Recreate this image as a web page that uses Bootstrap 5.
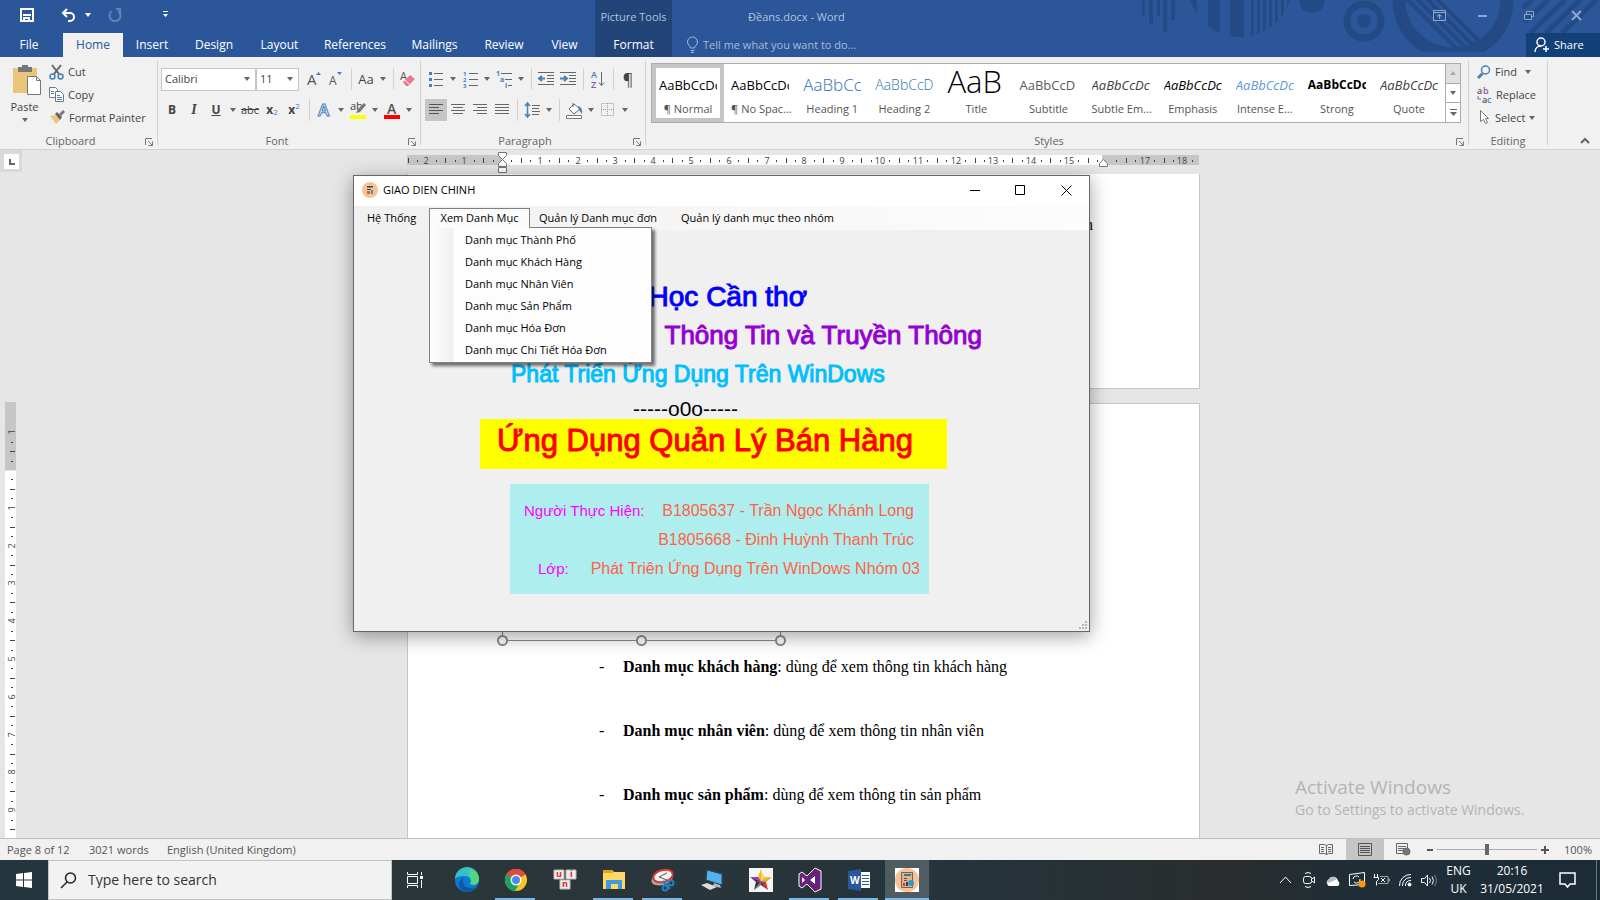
<!DOCTYPE html>
<html lang="en">
<head>
<meta charset="utf-8">
<meta name="viewport" content="width=device-width, initial-scale=1">
<title>Đềans.docx - Word</title>
<link href="https://cdn.jsdelivr.net/npm/bootstrap@5.3.0/dist/css/bootstrap.min.css" rel="stylesheet">
<style>
:root{--blue:#2b579a;--ink:#444;--line:#d2d2d2}
body{font:12px/16px "Open Sans","Noto Sans",sans-serif;color:var(--ink);background:#e6e6e6;overflow:hidden}
button{border:0;background:none;padding:0;color:inherit;font:inherit;white-space:nowrap}
svg{display:block;flex:none;overflow:visible}
/* header */
.appbar{background:var(--blue);color:#fff;position:relative}
.appbar .deco{position:absolute;top:0;right:0}
.qat{height:33px;padding:0 0 3px 19px}
.qat button{height:28px}
.tabs{display:grid;grid-template-columns:63px 60px 58px 66px 65px 86px 73px 66px 55px;height:24px}
.tabs button.on{background:#f1f1f1;color:var(--blue)}
.tabs button:first-child{padding-right:5px}
.pictools{width:77px;background:#224478;z-index:1}
.pictools div{height:33px;line-height:34px;color:#b3c3dc;font-size:11px}
.pictools button{height:24px}
.doc-title{color:#b3c3dc;padding-left:76px;line-height:34px;height:33px;font-size:11px}
.tell{color:#a9bbd7;padding-left:14px;font-size:11px}
.share{background:#124078;width:74px;height:24px}
.wctl{color:#8ea7cc;height:30px;padding-right:18px}
.sm11{font-size:11px}
/* ribbon */
.ribbon{background:#f1f1f1;border-bottom:1px solid var(--line);height:93px}
.grp{border-right:1px solid var(--line);margin:4px 0 4px;height:84px;position:relative;flex:none}
.grp.wide{flex:1 1 0;min-width:0}
.grp-name{height:18px;font-size:11px;line-height:18px;color:#666;text-align:center;position:relative}
.grp-name button{position:absolute;right:4px;top:6px}
.ctl{height:71px;overflow:hidden}
.strip{height:22px;display:flex;align-items:center}
.i22{width:22px;height:22px;display:flex;align-items:center;justify-content:center;flex:none}
.i12{width:12px;height:22px;display:flex;align-items:center;justify-content:center;flex:none}
.crt{display:block;border:3px solid transparent;border-top:4px solid #666;border-bottom:0}
.vs{width:8px;height:22px;display:flex;justify-content:center;flex:none}
.vs::after{content:"";width:1px;background:var(--line)}
.pressed{background:#c5c5c5}
.cmd{height:23px;display:flex;align-items:center;font-size:11px;gap:4px}
.pick{border:1px solid #c6c6c6;background:#fff url("data:image/svg+xml,%3Csvg xmlns='http://www.w3.org/2000/svg' width='6' height='4'%3E%3Cpath d='M0 0h6L3 4z' fill='%23666'/%3E%3C/svg%3E") no-repeat right 5px center;appearance:none;height:23px;font-size:11px;padding:0 3px;color:#444;border-radius:0}
.gallery{border:1px solid #ababab;background:#fff;height:60px;margin:2px 7px 0 5px}
.tile{flex:1 1 0;min-width:0;height:58px;padding:0 7px;overflow:hidden;display:flex;flex-direction:column}
.tile.on{outline:4px solid #c5c5c5;outline-offset:-4px}
.smp{height:32px;width:100%;overflow:hidden;margin-top:5px;font:13px/32px "Open Sans",sans-serif;text-align:left;color:#000;flex:none}
.tile .cap{font-size:11px;line-height:16px;text-align:center;width:100%;color:#555}
.spin{width:15px;border-left:1px solid #ababab}
.spin button{flex:1;display:flex;align-items:center;justify-content:center;width:100%}
.spin button+button{border-top:1px solid #ababab}
/* workspace */
.work{display:grid;grid-template-columns:22px 1fr 15px;flex:1;min-height:0;overflow:hidden;position:relative}
.corner{width:22px;height:22px;background:#d9d9d9;display:flex;align-items:center;justify-content:center}
.corner i{display:block;width:15px;height:15px;background:#fff;padding:5px}
.corner i::after{content:"";display:block;width:6px;height:6px;border:solid #666;border-width:0 0 2px 2px}
.sheet-col{width:793px;max-width:100%;margin:0 auto}
.sheet{background:#fff;border:1px solid #c6c6c6;font:16px/20px "Liberation Serif",serif;color:#000}
.sheet.first{height:215px;border-top:0;margin-bottom:14px;padding:41px 106px 0 0;text-align:right}
.sheet.second{height:900px;padding:10px 100px 0 94px}
.picsel{width:279px;height:227px;border:1px solid #8b8b8b;position:relative;margin-bottom:16px}
.picsel i{position:absolute;width:11px;height:11px;border:2px solid #8b8b8b;border-radius:50%;background:#fff;bottom:-6px}
.entry{padding-left:97px;margin-bottom:44px;display:flex;white-space:nowrap}
.entry span{width:24px}
.wmark{position:absolute;right:68px;bottom:17px;width:237px;color:#b4b4b4;font-size:14px;line-height:22px;white-space:nowrap}
.wmark div{font-size:19px;line-height:24px}
/* WinForms window */
.form-win{position:absolute;left:353px;top:175px;width:737px;height:457px;border:1px solid #666;background:#f0f0f0;box-shadow:0 4px 18px rgba(0,0,0,.38);color:#000;z-index:5}
.form-head{height:30px;background:#fff;padding:0 17px 2px 8px}
.form-menu{height:24px;background:linear-gradient(90deg,#f0f0f0,#fdfdfd);padding:2px 4px 0;font-size:11px}
.form-menu>div{position:relative}
.form-menu .top{height:20px;padding:0 9px 2px 8px;border:1px solid transparent;border-bottom:0}
.form-menu .open{background:#fbfbfb;border-color:#80807f;width:101px;padding:0 0 2px}
.drop{position:absolute;left:0;top:19px;width:223px;border:1px solid #808080;background:linear-gradient(90deg,#fdfdfd,#f0f0f0 23px,#fdfdfd 24px);padding:1px;box-shadow:3px 3px 3px rgba(0,0,0,.55);z-index:2}
.drop::before{content:"";position:absolute;left:0;top:-1px;width:99px;height:1px;background:#fbfbfb}
.drop button{display:block;height:22px;padding-left:34px;width:100%;text-align:left}
.form-body{padding-top:47px;font-family:"Liberation Sans",sans-serif;white-space:nowrap}
.ln{line-height:39px;margin:0;-webkit-text-stroke:1px currentColor}
.l1{font-size:28px;color:#00f;text-align:right;padding-right:282px}
.l2{font-size:26px;color:#9400d3;text-align:right;padding-right:107px}
.l3{font-size:23px;color:#00bfff;padding-left:157px}
.l4{font-size:21px;line-height:20px;padding:5px 0 0 279px}
.l5{font-size:31px;background:#ff0;color:red;-webkit-text-stroke:1px currentColor;width:467px;height:50px;line-height:44px;margin:0 0 15px 126px;padding-left:17px}
.who{background:#afeeee;width:419px;height:110px;margin-left:156px;padding:12px 15px 0 14px;font-size:16px;line-height:29px;color:#ff6347}
.who span{color:#f0f;font-size:15px}
/* status and task bars */
.status{height:22px;background:#f1f1f1;border-top:1px solid #c0c0c0;font-size:11px;color:#555}
.zoomer{appearance:none;width:100px;height:12px;background:linear-gradient(#aaa,#aaa) center/100% 1px no-repeat}
.zoomer::-webkit-slider-thumb{appearance:none;width:4px;height:11px;background:#666}
.task{height:40px;background:linear-gradient(90deg,#25353d,#2b363a 30%,#25343b 60%,#2a2d2d 77%,#1f2e37 85%,#1c2c36);color:#fff}
.find{width:344px;height:40px;background:#f2f2f2;border:1px solid #c2c2c2;padding-left:11px;gap:11px}
.find input{border:0;background:none;font-size:14px;color:#444;padding:0;width:270px;outline:0}
.find input::placeholder{color:#333;opacity:1}
.app{width:49px;height:40px;display:flex;align-items:center;justify-content:center;position:relative}
.run::after{content:"";position:absolute;left:4px;right:5px;bottom:0;height:2px;background:#76b9ed}
.act{background:#4f5c62;width:45px;margin-left:2px;border-right:1px solid #2b363a}.act::after{left:0;right:0}
.tray>button{width:24px;display:flex;justify-content:center}
.clock{font-size:12px;line-height:18px;text-align:center}
</style>
</head>
<body class="vh-100 d-flex flex-column">
<header class="appbar d-flex">
  <svg class="deco" width="460" height="57" viewBox="1140 0 460 57" fill="#234a85">
    <path d="M1142 0h3v16h-3zM1149 0h4v24h-4zM1157 0h3v16h-3zM1163 0h4v32h-4zM1171 0h4v20h-4z"/>
    <clipPath id="c1"><circle cx="1240" cy="-15" r="52"/></clipPath>
    <g clip-path="url(#c1)"><path d="M1188 0h9v30h-9zM1208 0h12v40h-12zM1230 0h14v40h-14zM1251 0h3v40h-3zM1257 0h3v40h-3zM1263 0h3v40h-3zM1269 0h3v40h-3zM1275 0h3v40h-3zM1281 0h3v40h-3zM1287 0h3v40h-3z"/></g>
    <circle cx="1312" cy="0" r="13"/>
    <circle cx="1364" cy="21" r="17" fill="none" stroke="#234a85" stroke-width="7"/><circle cx="1364" cy="21" r="7"/>
    <clipPath id="c2"><path d="M1390 0h130v52h-130z"/></clipPath>
    <g clip-path="url(#c2)"><circle cx="1453" cy="0" r="54" fill="none" stroke="#234a85" stroke-width="13"/>
    <path d="M1404-4l58 58M1414-4l58 58M1424-4l52 52M1434-4l48 48" stroke="#234a85" stroke-width="4"/></g>
    <clipPath id="c3"><path d="M1520 0h80v57h-80z"/></clipPath>
    <path clip-path="url(#c3)" d="M1523 8l9-8M1524 22l24-22M1530 33l35-33M1546 33l34-33M1562 33l34-33" stroke="#234a85" stroke-width="5"/>
  </svg>
  <div>
    <div class="qat d-flex align-items-center">
      <button aria-label="Save" style="width:42px"><svg width="16" height="16" fill="none" stroke="#fff" stroke-width="2"><path d="M2 2h12v12H2zM4 8h8M5 14v-3h5v3"/></svg></button>
      <div class="d-flex align-items-center" style="width:534px">
      <button aria-label="Undo"><svg width="16" height="16" fill="none" stroke="#fff" stroke-width="2"><path d="M6 2L2 6l4 4M2 6h7a4 4 0 0 1 0 8H7"/></svg></button>
      <button aria-label="Undo list" class="px-2"><span class="crt" style="border-top-color:#fff"></span></button>
      <button aria-label="Redo" class="ms-1 ps-1"><svg width="16" height="16" fill="none" stroke="#6382b5" stroke-width="2"><path d="M5 4a5.500 5.500 0 1 0 6 0M9 2h4v4"/></svg></button>
      <button aria-label="Customize toolbar" class="ms-4 ps-3"><svg width="6" height="8" fill="#fff"><path d="M0 0h5v1H0zM0 3h5L2.500 6z"/></svg></button>
      </div>
    </div>
    <nav class="tabs"><button>File</button><button class="on">Home</button><button>Insert</button><button>Design</button><button>Layout</button><button>References</button><button>Mailings</button><button>Review</button><button>View</button></nav>
  </div>
  <div class="pictools text-center"><div>Picture Tools</div><button>Format</button></div>
  <div class="flex-fill position-relative">
    <div class="d-flex justify-content-between"><div class="doc-title">Đềans.docx - Word</div>
      <div class="wctl d-flex align-items-center gap-4">
        <button aria-label="Ribbon display" class="me-1"><svg width="13" height="11" fill="none" stroke="currentColor"><path d="M.5.500h12v10H.5zM.5 2.500h12M6.500 9V4.500M4 6.500l2.500-2 2.500 2"/></svg></button>
        <button aria-label="Minimize" class="ms-1 me-2"><svg width="10" height="10"><path d="M0 5h9v2H0z" fill="currentColor"/></svg></button>
        <button aria-label="Restore" class="ms-1 me-2"><svg width="11" height="11" fill="none" stroke="currentColor"><path d="M.5 4.500h7v5h-7zM2.500 4V1.500h7v5H8"/></svg></button>
        <button aria-label="Close" class="ms-1"><svg width="11" height="11" fill="none" stroke="currentColor" stroke-width="2"><path d="M1 1l9 9M10 1l-9 9"/></svg></button>
      </div></div>
    <div class="d-flex justify-content-between align-items-center">
      <button class="tell d-flex gap-1 align-items-center"><svg width="13" height="16" fill="none" stroke="currentColor"><path d="M4.500 11c0-2-3-3-3-6a5 5 0 0 1 10 0c0 3-3 4-3 6zM4.500 13.500h4M5 15.500h3"/></svg>Tell me what you want to do...</button>
      <button class="share d-flex align-items-center ps-2 gap-1 sm11"><svg width="16" height="16" fill="none" stroke="#fff" stroke-width="1.500"><circle cx="7" cy="5" r="4"/><path d="M1 15c0-4 3-6 6-6M12 9v6M9 12h6"/></svg>Share</button>
    </div>
  </div>
</header>

<section class="ribbon d-flex">
  <div class="grp" style="width:158px"><div class="ctl d-flex">
    <button style="width:49px" class="d-flex flex-column align-items-center sm11"><svg class="mt-1 ms-1" width="29" height="31"><path d="M1 3h24v25H1z" fill="#ecc57c"/><path d="M6 2h4V0h6v2h4v5H6z" fill="#777"/><path d="M15.500 11.500h9l4 4v14h-13z" fill="#fff" stroke="#777"/><path d="M24.500 11.500v4h4" fill="none" stroke="#777"/></svg><span class="mt-1" style="line-height:14px">Paste</span><span class="crt mt-1"></span></button>
    <div style="margin-top:-1px"><button class="cmd"><svg width="15" height="16" fill="none"><path d="M3 1l7 9M12 1L5 10" stroke="#666" stroke-width="2"/><circle cx="3.500" cy="12.500" r="2.500" stroke="#4682b8" stroke-width="1.500"/><circle cx="11.500" cy="12.500" r="2.500" stroke="#4682b8" stroke-width="1.500"/></svg>Cut</button>
    <button class="cmd"><svg width="15" height="15" fill="#fff" stroke="#777"><path d="M.5.500h6l2 2v8h-8z"/><path d="M6.500 4.500h5l3 3v7h-8z"/><path d="M2 4.500h3M2 6.500h3M8 8.500h3M8 10.500h5M8 12.500h5" stroke="#4682b8"/></svg>Copy</button>
    <button class="cmd"><svg width="16" height="15"><path d="M1 6l5-1 5 5-4 4z" fill="#ecc57c"/><path d="M6 4l2-2 5 5-2 3z" fill="#666"/><path d="M10 4l4-4 2 2-4 4z" fill="#777"/></svg>Format Painter</button></div>
  </div><div class="grp-name pe-3">Clipboard<button aria-label="Clipboard options"><svg width="8" height="8" fill="none" stroke="#777"><path d="M7 .5H.5V7M3 3l4 4M7.500 3.500v4h-4"/></svg></button></div></div>

  <div class="grp" style="width:263px"><div class="ctl" style="padding:7px 0 0 3px">
    <div class="strip" style="margin-bottom:9px"><select class="pick" style="width:95px" aria-label="Font"><option>Calibri</option></select><select class="pick me-1" style="width:43px" aria-label="Size"><option>11</option></select>
      <button class="i22" aria-label="Grow font"><svg width="14" height="16"><text x="0" y="14" font-size="15" fill="#555">A</text><path d="M9 4h5l-2.500-3z" fill="#4682b8"/></svg></button>
      <button class="i22" aria-label="Shrink font"><svg width="14" height="16"><text x="0" y="14" font-size="12" fill="#555">A</text><path d="M8 1h5l-2.500 3z" fill="#4682b8"/></svg></button><span class="vs"></span>
      <button class="i22" style="font-size:13px">Aa</button><button class="i12" aria-label="Case"><span class="crt"></span></button><span class="vs"></span>
      <button class="i22" aria-label="Clear formatting"><svg width="16" height="16"><text x="0" y="9" font-size="11" fill="#555">A</text><path d="M3 11l7-7 5 4-7 7H6z" fill="#e8798f"/><path d="M5 9l4 4" stroke="#fff"/></svg></button></div>
    <div class="strip"><button class="i22"><b>B</b></button><button class="i22"><i style="font-family:'Liberation Serif',serif;font-size:14px"><b>I</b></i></button><button class="i22"><b><u>U</u></b></button><button class="i12" aria-label="Underline style"><span class="crt"></span></button>
      <button class="i22 sm11"><s>abc</s></button><button class="i22"><b>x</b><sub style="font-size:8px;color:#4682b8">2</sub></button><button class="i22"><b>x</b><sup style="font-size:8px;color:#4682b8">2</sup></button><span class="vs"></span>
      <button class="i22" aria-label="Text effects"><svg width="16" height="16"><text x="2" y="14" font-size="17" font-weight="600" fill="#fff" stroke="#4682b8">A</text></svg></button><button class="i12" aria-label="Effects"><span class="crt"></span></button>
      <button class="i22" aria-label="Highlight"><svg width="17" height="17"><text x="0" y="8" font-size="11" fill="#444">ab</text><path d="M6 11l2-4 6-6 2 2-6 7z" fill="#777"/><path d="M0 13h16v4H0z" fill="#ff0"/></svg></button><button class="i12" aria-label="Highlight color"><span class="crt"></span></button>
      <button class="i22" aria-label="Font color"><svg width="16" height="17"><text x="3" y="12" font-size="14" font-weight="600" fill="#555">A</text><path d="M0 13h16v4H0z" fill="red"/></svg></button><button class="i12" aria-label="Color"><span class="crt"></span></button></div>
  </div><div class="grp-name pe-4">Font<button aria-label="Font options"><svg width="8" height="8" fill="none" stroke="#777"><path d="M7 .5H.5V7M3 3l4 4M7.500 3.500v4h-4"/></svg></button></div></div>

  <div class="grp" style="width:225px"><div class="ctl" style="padding:7px 0 0 4px">
    <div class="strip" style="margin-bottom:9px">
      <button class="i22" aria-label="Bullets"><svg width="14" height="16"><path d="M5 2.500h9M5 8.500h9M5 14.500h9" stroke="#666"/><path d="M0 1h3v3H0zM0 7h3v3H0zM0 13h3v3H0z" fill="#4682b8"/></svg></button><button class="i12" aria-label="Bullet style"><span class="crt"></span></button>
      <button class="i22" aria-label="Numbering"><svg width="15" height="17"><path d="M6 2.500h9M6 8.500h9M6 14.500h9" stroke="#666"/><g font-size="6" font-weight="700" fill="#4682b8"><text y="5">1</text><text y="11">2</text><text y="17">3</text></g></svg></button><button class="i12" aria-label="Number style"><span class="crt"></span></button>
      <button class="i22" aria-label="Multilevel list"><svg width="16" height="17"><path d="M5 2.500h11M9 8.500h7M12 14.500h4" stroke="#666"/><g font-size="7" font-weight="700" fill="#4682b8"><text y="5">1</text><text x="4" y="11">a</text><text x="9" y="17">i</text></g></svg></button><button class="i12" aria-label="List style"><span class="crt"></span></button><span class="vs"></span>
      <button class="i22" aria-label="Decrease indent"><svg width="16" height="14"><path d="M0 .5h16M9 3.500h7M9 6.500h7M9 9.500h7M0 12.500h16" stroke="#666"/><path d="M7 6.500H1M4 4L1 6.500 4 9" stroke="#4682b8" stroke-width="2" fill="none"/></svg></button>
      <button class="i22" aria-label="Increase indent"><svg width="16" height="14"><path d="M0 .5h16M9 3.500h7M9 6.500h7M9 9.500h7M0 12.500h16" stroke="#666"/><path d="M0 6.500h6M4 4l3 2.500L4 9" stroke="#4682b8" stroke-width="2" fill="none"/></svg></button><span class="vs"></span>
      <button class="i22" aria-label="Sort"><svg width="14" height="17"><text y="7" font-size="9" font-weight="600" fill="#4682b8">A</text><text y="17" font-size="9" font-weight="600" fill="#8e56a8">Z</text><path d="M10.500 1v13M8 11.500l2.500 3 2.500-3" stroke="#666" fill="none"/></svg></button><span class="vs"></span>
      <button class="i22" style="font-size:16px">¶</button></div>
    <div class="strip">
      <button class="i22 pressed" aria-label="Align left"><svg width="14" height="12"><path d="M0 .5h14M0 3.500h10M0 6.500h14M0 9.500h10" stroke="#555"/></svg></button>
      <button class="i22" aria-label="Center"><svg width="14" height="12"><path d="M0 .5h14M2 3.500h10M0 6.500h14M2 9.500h10" stroke="#666"/></svg></button>
      <button class="i22" aria-label="Align right"><svg width="14" height="12"><path d="M0 .5h14M4 3.500h10M0 6.500h14M4 9.500h10" stroke="#666"/></svg></button>
      <button class="i22" aria-label="Justify"><svg width="14" height="12"><path d="M0 .5h14M0 3.500h14M0 6.500h14M0 9.500h14" stroke="#666"/></svg></button><span class="vs"></span>
      <button class="i22" aria-label="Line spacing"><svg width="15" height="16"><path d="M7 3.500h8M7 6.500h7M7 9.500h8M7 12.500h7" stroke="#666"/><path d="M2.500 1v14M0 4l2.500-3L5 4M0 12l2.500 3L5 12" stroke="#4682b8" fill="none" stroke-width="1.500"/></svg></button><button class="i12" aria-label="Spacing"><span class="crt"></span></button><span class="vs"></span>
      <button class="i22" aria-label="Shading"><svg width="17" height="17"><path d="M8 2l6 5-6 5-5-5z" fill="#fff" stroke="#666"/><path d="M7 5V1" stroke="#666"/><path d="M12 4q5 1 4 8l-3-4z" fill="#4682b8"/><path d="M.5 13.500h15v3H.5z" fill="#fff" stroke="#777"/></svg></button><button class="i12" aria-label="Shading color"><span class="crt"></span></button>
      <button class="i22" aria-label="Borders"><svg width="14" height="14" fill="none" stroke="#a58db5" stroke-dasharray="1 1"><path d="M.5.500h12v12H.5zM6.500 0v13M0 6.500h13"/></svg></button><button class="i12" aria-label="Border style"><span class="crt"></span></button></div>
  </div><div class="grp-name pe-3">Paragraph<button aria-label="Paragraph options"><svg width="8" height="8" fill="none" stroke="#777"><path d="M7 .5H.5V7M3 3l4 4M7.500 3.500v4h-4"/></svg></button></div></div>

  <div class="grp wide"><div class="ctl"><div class="gallery d-flex">
    <button class="tile on"><span class="smp">AaBbCcDc</span><span class="cap">¶ Normal</span></button>
    <button class="tile"><span class="smp">AaBbCcDc</span><span class="cap">¶ No Spac...</span></button>
    <button class="tile"><span class="smp" style="font-size:17px;font-weight:300;color:#2e74b5">AaBbCc</span><span class="cap">Heading 1</span></button>
    <button class="tile"><span class="smp" style="font-size:14px;font-weight:300;color:#2e74b5">AaBbCcD</span><span class="cap">Heading 2</span></button>
    <button class="tile"><span class="smp" style="font-size:31px;font-weight:300;line-height:24px">AaB</span><span class="cap">Title</span></button>
    <button class="tile"><span class="smp" style="color:#5a5a5a">AaBbCcD</span><span class="cap">Subtitle</span></button>
    <button class="tile"><span class="smp fst-italic" style="color:#404040">AaBbCcDc</span><span class="cap">Subtle Em...</span></button>
    <button class="tile"><span class="smp fst-italic">AaBbCcDc</span><span class="cap">Emphasis</span></button>
    <button class="tile"><span class="smp fst-italic" style="color:#5b9bd5">AaBbCcDc</span><span class="cap">Intense E...</span></button>
    <button class="tile"><span class="smp fw-bold" style="font-size:12px">AaBbCcDc</span><span class="cap">Strong</span></button>
    <button class="tile"><span class="smp fst-italic" style="color:#404040">AaBbCcDc</span><span class="cap">Quote</span></button>
    <div class="spin d-flex flex-column"><button aria-label="Up" style="background:#e1e1e1"><svg width="6" height="4"><path d="M0 4h6L3 0z" fill="#aaa"/></svg></button><button aria-label="Down"><span class="crt"></span></button><button aria-label="More styles"><svg width="7" height="7" fill="#666"><path d="M0 0h7v1H0zM0 3h7L3.500 7z"/></svg></button></div>
  </div></div><div class="grp-name pe-3">Styles<button aria-label="Styles options"><svg width="8" height="8" fill="none" stroke="#777"><path d="M7 .5H.5V7M3 3l4 4M7.500 3.500v4h-4"/></svg></button></div></div>

  <div class="grp" style="width:79px"><div class="ctl ps-2"><div style="margin-top:-1px">
    <button class="cmd"><svg width="14" height="14" fill="none" stroke="#4682b8"><circle cx="8.500" cy="5" r="4" stroke-width="1.500"/><path d="M5.500 8.500L1 13" stroke-width="3"/></svg>Find<span class="crt ms-1"></span></button>
    <button class="cmd"><svg width="15" height="16" font-size="9" font-weight="600"><text y="7" fill="#555">a</text><text x="6" y="7" fill="#8e56a8">b</text><text x="5" y="16" fill="#555">a</text><text x="10" y="16" fill="#4682b8">c</text><path d="M1 9v3h3" stroke="#4682b8" fill="none"/></svg><span>Replace</span></button>
    <button class="cmd"><svg width="14" height="15" fill="#fff" stroke="#777"><path d="M3.500.500v11l3-2 2 4 2-1-2-4h3z"/></svg>Select<span class="crt"></span></button></div>
  </div><div class="grp-name">Editing</div></div>
  <div style="width:52px" class="d-flex align-items-end justify-content-end flex-shrink-0"><button aria-label="Collapse ribbon" class="me-2"><svg width="12" height="12" fill="none" stroke="#666" stroke-width="2"><path d="M1 6l4-4 4 4"/></svg></button></div>
</section>

<main class="work">
  <div><div class="corner"><i></i></div><svg id="vr" width="22" height="668"></svg></div>
  <div><div class="sheet-col">
    <svg id="hr" width="793" height="24"></svg>
    <div class="sheet first">n</div>
    <div class="sheet second">
      <div class="picsel"><i style="left:-6px"></i><i style="left:133px"></i><i style="right:-6px"></i></div>
      <div class="entry"><span>-</span><div><b>Danh mục khách hàng</b>: dùng để xem thông tin khách hàng</div></div>
      <div class="entry"><span>-</span><div><b>Danh mục nhân viên</b>: dùng để xem thông tin nhân viên</div></div>
      <div class="entry"><span>-</span><div><b>Danh mục sản phẩm</b>: dùng để xem thông tin sản phẩm</div></div>
    </div>
  </div></div>
  <div class="wmark"><div>Activate Windows</div>Go to Settings to activate Windows.</div>
</main>

<section class="form-win">
  <div class="form-head d-flex align-items-center"><svg width="16" height="16"><circle cx="8" cy="8" r="8" fill="#f9c396"/><path d="M5 4h6v1.500H5zM5 7h4v1H5z" fill="#345"/><path d="M5 9h3v3H5z" fill="#c63"/><path d="M9 8h2v4H9z" fill="#2a9dc8"/></svg><span class="sm11 me-auto" style="margin-left:5px">GIAO DIEN CHINH</span>
    <button aria-label="Minimize"><svg width="10" height="10"><path d="M0 5h10v1H0z"/></svg></button><button aria-label="Maximize" style="margin:0 36px 0 35px"><svg width="10" height="10" fill="none" stroke="#000"><path d="M.5.500h9v9h-9z"/></svg></button><button aria-label="Close"><svg width="11" height="11" stroke="#000"><path d="M.5.500l10 10M10.500.500l-10 10"/></svg></button></div>
  <div class="form-menu d-flex">
    <div style="width:71px"><button class="top">Hệ Thống</button></div>
    <div style="width:101px"><button class="top open">Xem Danh Mục</button>
      <div class="drop"><button>Danh mục Thành Phố</button><button>Danh mục Khách Hàng</button><button>Danh mục Nhân Viên</button><button>Danh mục Sản Phẩm</button><button>Danh mục Hóa Đơn</button><button>Danh mục Chi Tiết Hóa Đơn</button></div></div>
    <div style="width:142px"><button class="top">Quản lý Danh mục đơn</button></div>
    <div><button class="top">Quản lý danh mục theo nhóm</button></div>
  </div>
  <div class="form-body">
    <p class="ln l1">Học Cần thơ</p>
    <p class="ln l2">Thông Tin và Truyền Thông</p>
    <p class="ln l3">Phát Triển Ứng Dụng Trên WinDows</p>
    <div class="l4">-----o0o-----</div>
    <div class="l5">Ứng Dụng Quản Lý Bán Hàng</div>
    <div class="who"><div class="d-flex justify-content-between"><span>Người Thực Hiện:</span>B1805637 - Trần Ngọc Khánh Long</div>
      <div class="text-end">B1805668 - Đinh Huỳnh Thanh Trúc</div>
      <div class="d-flex justify-content-between" style="margin:0 -6px 0 14px"><span>Lớp:</span>Phát Triên Ứng Dụng Trên WinDows Nhóm 03</div></div>
  </div>
  <svg class="position-absolute bottom-0 end-0" width="10" height="10" fill="#b8b8b8"><path d="M6 0h2v2H6zM3 3h2v2H3zM6 3h2v2H6zM0 6h2v2H0zM3 6h2v2H3zM6 6h2v2H6z"/></svg>
</section>

<footer>
  <div class="status d-flex align-items-center">
    <span style="width:81px;padding-left:7px">Page 8 of 12</span><span class="ps-2" style="width:86px">3021 words</span><span class="me-auto">English (United Kingdom)</span>
    <button class="px-2 me-1" aria-label="Read mode"><svg width="15" height="13" fill="none" stroke="#666"><path d="M.5 1.500h5l2 1 2-1h4v9h-4l-2 1-2-1h-5zM7.500 2v10M2 4.500h3M2 6.500h3M2 8.500h3M9 4.500h3M9 6.500h3M9 8.500h3"/></svg></button>
    <button class="pressed d-flex align-items-center justify-content-center" style="width:38px;height:21px" aria-label="Print layout"><svg width="14" height="13" fill="none" stroke="#555"><path d="M.5.500h13v12H.5zM2 3.500h10M2 5.500h10M2 7.500h10M2 9.500h10"/></svg></button>
    <button class="ps-2 ms-1 me-3" aria-label="Web layout"><svg width="15" height="13" fill="none" stroke="#666"><path d="M7 10.500H.5V.500h11V5M2 3.500h8M2 5.500h6M2 7.500h5"/><circle cx="10.500" cy="8.500" r="3.500" fill="#777"/></svg></button>
    <button class="me-1" aria-label="Zoom out"><svg width="6" height="8"><path d="M0 3h6v2H0z" fill="#555"/></svg></button><input class="zoomer" type="range" aria-label="Zoom" value="50"><button class="ms-1" aria-label="Zoom in"><svg width="8" height="8"><path d="M0 3h3V0h2v3h3v2H5v3H3V5H0z" fill="#555"/></svg></button><span class="text-end pe-2" style="width:51px">100%</span>
  </div>
  <div class="task d-flex align-items-center">
    <button class="app" style="width:48px" aria-label="Start"><svg width="16" height="16" fill="#fff"><path d="M0 2l7-1v6.500H0zM8 1l8-1v7.500H8zM0 8.500h7V15l-7-1zM8 8.500h8V16l-8-1z"/></svg></button>
    <label class="find d-flex align-items-center"><svg width="17" height="17" fill="none" stroke="#222" stroke-width="1.500"><circle cx="10.500" cy="6" r="5"/><path d="M7 10l-6 6"/></svg><input placeholder="Type here to search" aria-label="Search"></label>
    <button class="app" style="width:50px;padding-right:4px" aria-label="Task view"><svg width="17" height="16" fill="none" stroke="#fff"><path d="M.5 0v2.500h10V0M.5 4.500h10v7H.5zM.5 16v-2.500h10V16M14.500 0v3M14.500 8v8"/><path d="M13 4h3v3h-3z" fill="#fff" stroke="none"/></svg></button>
    <button class="app" aria-label="Edge"><svg width="24" height="24"><circle cx="12" cy="12" r="12" fill="#0c7ad0"/><path d="M0 11A12 12 0 0 1 24 11c0 5-5 7-9 5 2-3 0-8-5-8S1 9 0 11z" fill="#35c1c8"/><path d="M14 1c6 1 10 5 10 10 0 5-5 7-9 5 2-2 2-5 0-8z" fill="#5fdb6a" opacity=".8"/><path d="M8 12c-1 6 5 10 13 7-5 8-17 5-17-3 0-3 2-5 5-6z" fill="#0f56a4"/></svg></button>
    <button class="app run" aria-label="Chrome"><svg width="22" height="22"><circle cx="11" cy="11" r="11" fill="#fbc61d"/><path d="M11 11L1.500 5.500A11 11 0 0 1 20.500 5.500z" fill="#dd4b3e"/><path d="M11 11V6h9.500A11 11 0 0 0 1.500 5.500z" fill="#dd4b3e"/><path d="M1.500 5.500A11 11 0 0 0 10 22l5-8.500-4-2.500z" fill="#1aa260"/><circle cx="11" cy="11" r="5.500" fill="#fff"/><circle cx="11" cy="11" r="4" fill="#4a8af4"/></svg></button>
    <button class="app" aria-label="UniKey"><svg width="24" height="20" font-size="9" font-weight="700" fill="#e22"><path d="M1 0h10v9H1zM13 0h10v9H13zM7 10h10v9H7z" fill="#eee" stroke="#bbb"/><text x="3" y="7">u</text><text x="17" y="7">i</text><text x="9" y="17">n</text></svg></button>
    <button class="app run" aria-label="File Explorer"><svg width="22" height="20"><path d="M0 0h9l2 2h11v17H0z" fill="#fbd867"/><path d="M0 0h9l1 3H0z" fill="#e5a50a"/><path d="M3 19v-9h16v9h-4v-5H8v5z" fill="#3f9bdc"/></svg></button>
    <button class="app run" aria-label="Snipping Tool"><svg width="24" height="24" fill="none"><ellipse cx="11" cy="11" rx="11" ry="6" fill="#aaa" transform="rotate(-15 11 11)"/><ellipse cx="12" cy="8" rx="10" ry="6" fill="#f4f4f4" stroke="#d33" stroke-width="2" transform="rotate(-15 12 8)"/><path d="M8 9l8-4M8 9l8 3" stroke="#555"/><g stroke="#1f80c4" stroke-width="2"><circle cx="20" cy="15" r="2.500"/><circle cx="14" cy="20" r="2.500"/><path d="M12 13l7 8"/></g></svg></button>
    <button class="app" aria-label="Remote Desktop"><svg width="24" height="24"><path d="M7 2l15 4v11L6 12z" fill="#4fb3ef" stroke="#345"/><path d="M1 17l6-2 10 4-7 3z" fill="#ddd"/><path d="M14 15l6 2 1 3-8-2z" fill="#bbb"/></svg></button>
    <button class="app" aria-label="Star app"><svg width="24" height="24"><path d="M0 0h24v24H0z" fill="#f5f5f5"/><path d="M12 1L9 9l3 4z" fill="#f3b719"/><path d="M12 1l3 8-3 4z" fill="#f7d64a"/><path d="M15 9h8l-11 4z" fill="#e8c33a"/><path d="M23 9l-6 5-5-1z" fill="#e0a520"/><path d="M17 14l2 8-7-9z" fill="#c33"/><path d="M12 13l7 9-7-5z" fill="#822"/><path d="M12 13v4l-7 5z" fill="#777"/><path d="M12 13l-7 9 2-8z" fill="#333"/><path d="M12 13l-5 1-6-5z" fill="#5b1f80"/><path d="M1 9h8l3 4z" fill="#8b3bb0"/></svg></button>
    <button class="app run" aria-label="Visual Studio"><svg width="24" height="24"><path d="M17 0l6 3v18l-6 3-8-8-5 4-3-2V6l3-2 5 4z" fill="#68217a" stroke="#fff"/><path d="M4 9v6l3-3zM17 8v8l-5-4z" fill="#fff"/></svg></button>
    <button class="app run" aria-label="Word"><svg width="22" height="22"><path d="M10 3h12v16H10z" fill="#fff"/><path d="M14 6.500h7M14 9.500h7M14 12.500h7M14 15.500h7" stroke="#2b579a"/><path d="M0 2l13-2v22L0 20z" fill="#2b579a"/><text x="2" y="15" font-size="10" font-weight="700" fill="#fff">W</text></svg></button>
    <button class="app run act" aria-label="Giao dien chinh"><svg width="24" height="24"><path d="M0 0h24v24H0z" fill="#fff"/><circle cx="12" cy="12" r="12" fill="#f9c396"/><path d="M6.500 4.500h11v15h-11z" fill="#e9b083" stroke="#666"/><path d="M9 6h7v2H9z" fill="#2a7fa8"/><path d="M9 10h3v1H9zM9 12h3v1H9z" fill="#555"/><path d="M8 15h2v3H8z" fill="#d33"/><path d="M11 14h2v4h-2z" fill="#345"/><circle cx="16" cy="15" r="3" fill="#2a9dc8"/></svg></button>
    <div class="tray d-flex align-items-center ms-auto">
      <button aria-label="Show hidden icons"><svg width="13" height="8" fill="none" stroke="#fff"><path d="M1 7l5.500-6L12 7"/></svg></button>
      <button aria-label="Meet now"><svg width="14" height="16" fill="none" stroke="#fff"><rect x="1.500" y="4.500" width="8" height="7" rx="2"/><path d="M10 7l2.500-2v6L10 9M3 1.500q3-2 6 0M3 14.500q3 2 6 0"/></svg></button>
      <button aria-label="OneDrive"><svg width="16" height="11"><path d="M4 11a4 4 0 0 1 0-7 5 5 0 0 1 9 2 3 3 0 0 1 0 5z" fill="#fff"/><path d="M4 4a5 5 0 0 1 8 0l-6 3-5 1z" fill="#bbb"/></svg></button>
      <button aria-label="Update"><svg width="17" height="16" fill="none" stroke="#fff"><path d="M.5 2.500l15-2v12l-15 1zM4 7a3.500 3.500 0 0 1 6-2M11 7a3.500 3.500 0 0 1-6 3"/><circle cx="13" cy="12" r="3.500" fill="#f90" stroke="none"/></svg></button>
      <button aria-label="Battery"><svg width="17" height="12" fill="none" stroke="#fff"><path d="M1.500 0v3M4.500 0v3M.5 3.500h5v2l-2 2v4M8 4l4 4M12 4L8 8"/><path d="M7 2.500h8v7H5M15 5h1.500v2H15" stroke="#9aa"/></svg></button>
      <button aria-label="Network"><svg width="14" height="14" fill="none" stroke="#fff"><path d="M1.500 13A11 11 0 0 1 13 1.500M4.500 13A8 8 0 0 1 13 4.500M7.500 13A5 5 0 0 1 13 7.500"/><circle cx="11.500" cy="11.500" r="1.500" fill="#fff"/></svg></button>
      <button aria-label="Volume"><svg width="17" height="13" fill="none" stroke="#fff"><path d="M.5 4.500h3l3-3.500v11l-3-3.500h-3zM8.500 4q2 2.500 0 5M11 2.500q3 4 0 8"/><path d="M13.500 1q4 5.500 0 11" stroke="#789"/></svg></button>
      <span class="clock" style="width:35px">ENG<br>UK</span><span class="clock" style="width:72px">20:16<br>31/05/2021</span>
      <button aria-label="Notifications" style="width:38px"><svg width="17" height="17" fill="none" stroke="#fff" stroke-width="1.500"><path d="M1 1h15v11h-5l-2.500 3L6 12H1z"/></svg></button>
      <div class="border-start border-secondary" style="width:4px;height:40px;margin-left:10px"></div>
    </div>
  </div>
</footer>
<script>
// Rulers: one number per centimetre, a long tick at each half, dots at the quarters.
const CM = 37.8;
function marks(from, to, zero, min, max, skip, put) {
  let out = '';
  for (let q = from * 4; q <= to * 4; q++) {
    const p = Math.round(zero + q * CM / 4);
    if (p < min || p > max || q === 0) continue;
    if (q % 4 === 0) { if (q / 4 !== skip) out += put(p, Math.abs(q / 4)); }
    else out += put(p, q % 2 === 0 ? 'tick' : 'dot');
  }
  return out;
}
document.getElementById('hr').innerHTML =
  '<path d="M0 5h792v10H0z" fill="#c6c6c6"/><path d="M95 5h600v10H95z" fill="#fff"/><g font-size="9" fill="#444" text-anchor="middle">' +
  marks(-3, 19, 95, 1, 789, 16, (p, k) => k === 'tick' ? `<path d="M${p} 8h1v5h-1z"/>` : k === 'dot' ? `<path d="M${p} 10h1v2h-1z"/>` : `<text x="${p}" y="14">${k}</text>`) +
  '</g><g fill="#fff" stroke="#777"><path d="M91.500 2.500h8v3l-4 4-4-4zM91.500 16.500v-3l4-4 4 4v3zM91.500 17.500h8v5h-8zM692.500 16.500v-3l4-4 4 4v3z"/></g>';
document.getElementById('vr').innerHTML =
  '<path d="M5 230h11v68H5z" fill="#c6c6c6"/><path d="M5 299h11v369H5z" fill="#fff"/><g font-size="9" fill="#444" text-anchor="middle">' +
  marks(-1, 10, 298, 235, 668, 99, (p, k) => k === 'tick' ? `<path d="M10 ${p}h5v1h-5z"/>` : k === 'dot' ? `<path d="M11 ${p}h2v1h-2z"/>` : `<text transform="translate(15 ${p}) rotate(-90)">${k}</text>`) + '</g>';
</script>
<script src="https://cdn.jsdelivr.net/npm/bootstrap@5.3.0/dist/js/bootstrap.bundle.min.js"></script>
</body>
</html>
